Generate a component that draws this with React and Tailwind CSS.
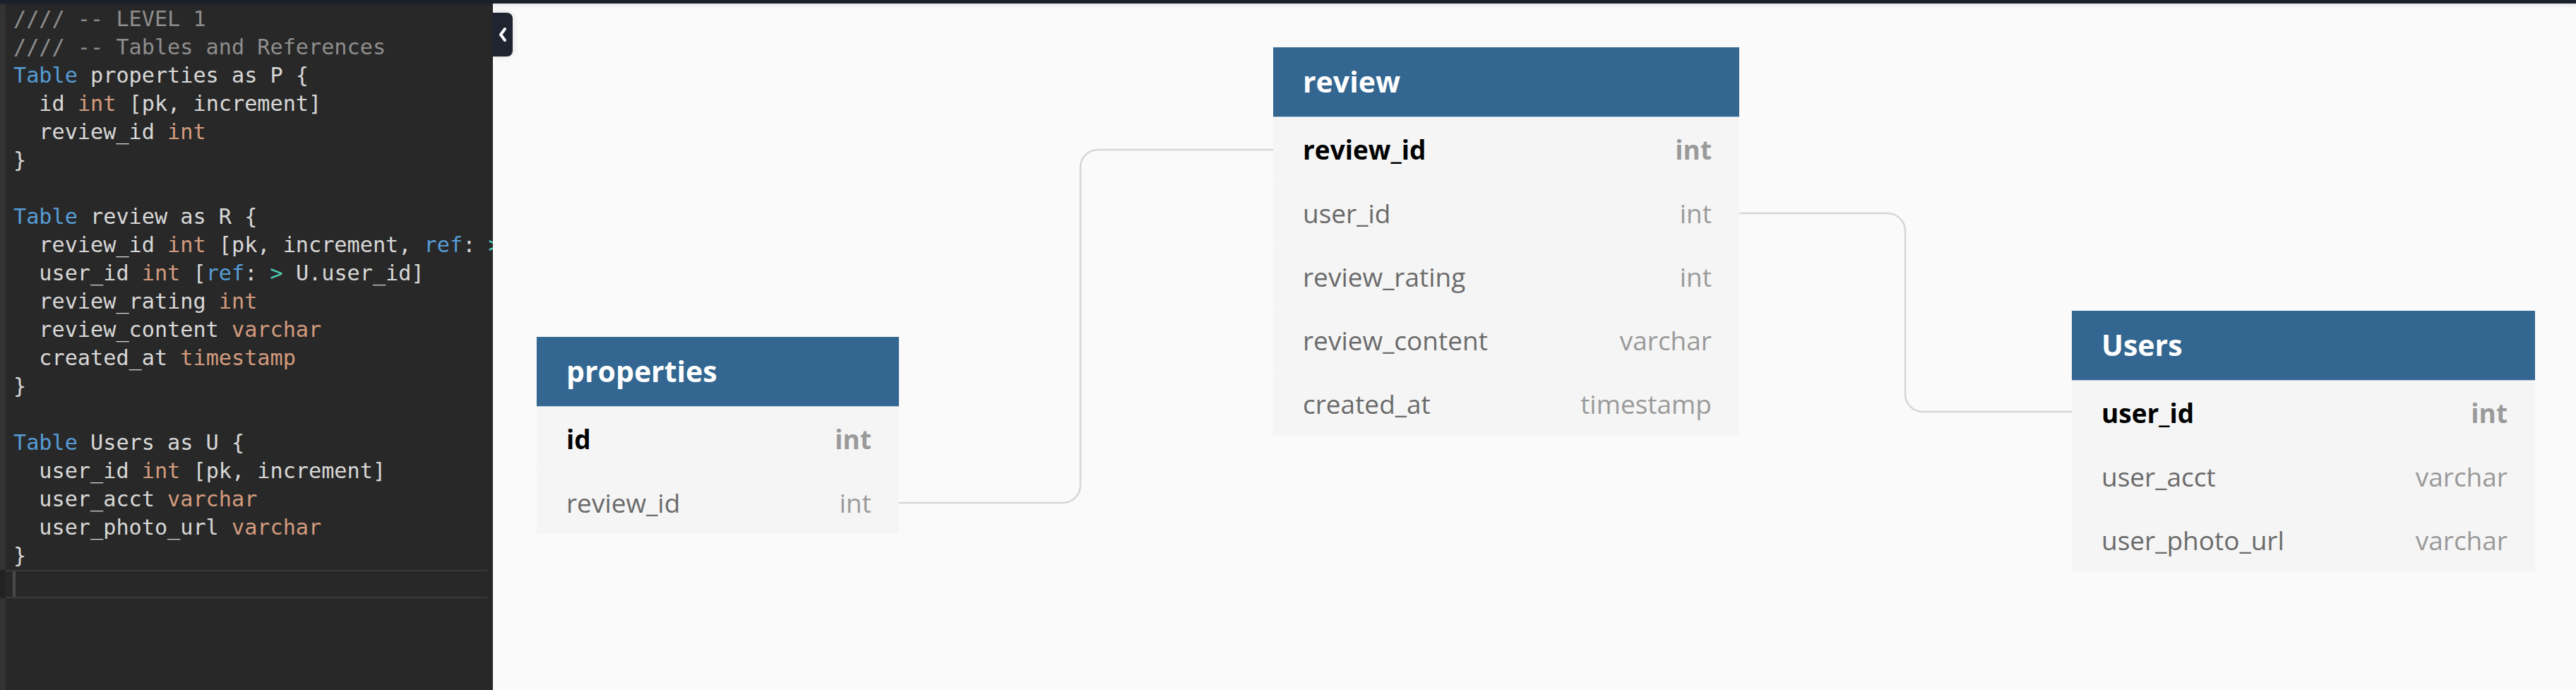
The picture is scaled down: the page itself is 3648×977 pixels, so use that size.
import React from "react";

const C = {
  kw: "text-[#569cd6]",
  ty: "text-[#d39b7e]",
  op: "text-[#4ec9b0]",
  cm: "text-[#8e8e8e]",
};

const lines = [
  [["//// -- LEVEL 1", C.cm]],
  [["//// -- Tables and References", C.cm]],
  [["Table", C.kw], [" properties as P {"]],
  [["  id "], ["int", C.ty], [" [pk, increment]"]],
  [["  review_id "], ["int", C.ty]],
  [["}"]],
  [[""]],
  [["Table", C.kw], [" review as R {"]],
  [["  review_id "], ["int", C.ty], [" [pk, increment, "], ["ref", C.kw], [": "], [">", C.op], [" P.review_id]"]],
  [["  user_id "], ["int", C.ty], [" ["], ["ref", C.kw], [": "], [">", C.op], [" U.user_id]"]],
  [["  review_rating "], ["int", C.ty]],
  [["  review_content "], ["varchar", C.ty]],
  [["  created_at "], ["timestamp", C.ty]],
  [["}"]],
  [[""]],
  [["Table", C.kw], [" Users as U {"]],
  [["  user_id "], ["int", C.ty], [" [pk, increment]"]],
  [["  user_acct "], ["varchar", C.ty]],
  [["  user_photo_url "], ["varchar", C.ty]],
  [["}"]],
];

function Editor() {
  return (
    <div className="flex h-full w-[698px] shrink-0 bg-[#282828] overflow-hidden">
      <div className="flex w-[8px] shrink-0 flex-col">
        <div className="h-[802px] bg-[#333333]" />
        <div className="h-[40px] bg-[#232323]" />
        <div className="flex-1 bg-[#333333]" />
      </div>
      <div className="flex min-w-0 flex-1 flex-col overflow-hidden pt-[2px] font-['DejaVu_Sans_Mono',monospace] text-[30.2px] leading-[40px] text-[#d8d8d8]">
        {lines.map((segs, i) => (
          <div key={i} className="h-[40px] whitespace-pre pl-[11px]">
            {segs.map(([t, cls], j) => (
              <span key={j} className={cls || ""}>
                {t}
              </span>
            ))}
          </div>
        ))}
        <div className="mr-[8px] flex h-[40px] border-y-2 border-[#3a3a3a]">
          <div className="ml-[10px] h-full w-[4px] bg-[#4a4a4a]" />
        </div>
      </div>
    </div>
  );
}

function Table({ name, rows, pos, width }) {
  return (
    <div className={`absolute ${pos} ${width} font-['Open_Sans',sans-serif]`}>
      <div className="flex h-[99px] items-center border-b border-[#b9cbdc] bg-[#336791] pl-[42px] text-[41px] font-bold text-white">
        {name}
      </div>
      {rows.map(([n, t, pk], i) => (
        <div
          key={i}
          className={`flex h-[90px] items-center justify-between border-t border-[#f9f9f9] bg-[#f5f5f5] pl-[42px] pr-[39px] text-[37px] ${
            pk ? "font-bold" : ""
          }`}
        >
          <span className={pk ? "text-black" : "text-[#6b6b6b]"}>{n}</span>
          <span className="text-[#9a9a9a]">{t}</span>
        </div>
      ))}
    </div>
  );
}

function Canvas() {
  return (
    <div className="relative h-full flex-1 bg-[#fafafa]">
      <svg className="absolute inset-0 h-full w-full" viewBox="0 0 2950 972" preserveAspectRatio="none">
        <path
          d="M575 707 H807 A25 25 0 0 0 832 682 V232 A25 25 0 0 1 857 207 H1105"
          fill="none"
          stroke="#d6d6d6"
          strokeWidth="2.5"
        />
        <path
          d="M1765 297 H1975 A25 25 0 0 1 2000 322 V553 A25 25 0 0 0 2025 578 H2236"
          fill="none"
          stroke="#d6d6d6"
          strokeWidth="2.5"
        />
      </svg>
      <Table
        name="properties"
        pos="left-[62px] top-[472px]"
        width="w-[513px]"
        rows={[
          ["id", "int", true],
          ["review_id", "int"],
        ]}
      />
      <Table
        name="review"
        pos="left-[1105px] top-[62px]"
        width="w-[660px]"
        rows={[
          ["review_id", "int", true],
          ["user_id", "int"],
          ["review_rating", "int"],
          ["review_content", "varchar"],
          ["created_at", "timestamp"],
        ]}
      />
      <Table
        name="Users"
        pos="left-[2236px] top-[435px]"
        width="w-[656px]"
        rows={[
          ["user_id", "int", true],
          ["user_acct", "varchar"],
          ["user_photo_url", "varchar"],
        ]}
      />
      <button className="absolute left-0 top-[13px] flex h-[62px] w-[28px] items-center justify-center rounded-r-[8px] bg-[#1f2430] shadow-[0_0_10px_rgba(0,0,0,0.12)]">
        <svg width="14" height="22" viewBox="0 0 14 22">
          <polyline points="10,3 4,11 10,19" fill="none" stroke="#ffffff" strokeWidth="4" strokeLinecap="round" strokeLinejoin="round" />
        </svg>
      </button>
    </div>
  );
}

export default function App() {
  return (
    <div className="flex h-[977px] w-[3648px] flex-col overflow-hidden bg-[#fafafa]">
      <div className="relative z-10 h-[5px] shrink-0 bg-[#1b202b] shadow-[0_2px_6px_rgba(0,0,0,0.12)]" />
      <div className="flex min-h-0 flex-1">
        <Editor />
        <Canvas />
      </div>
    </div>
  );
}
